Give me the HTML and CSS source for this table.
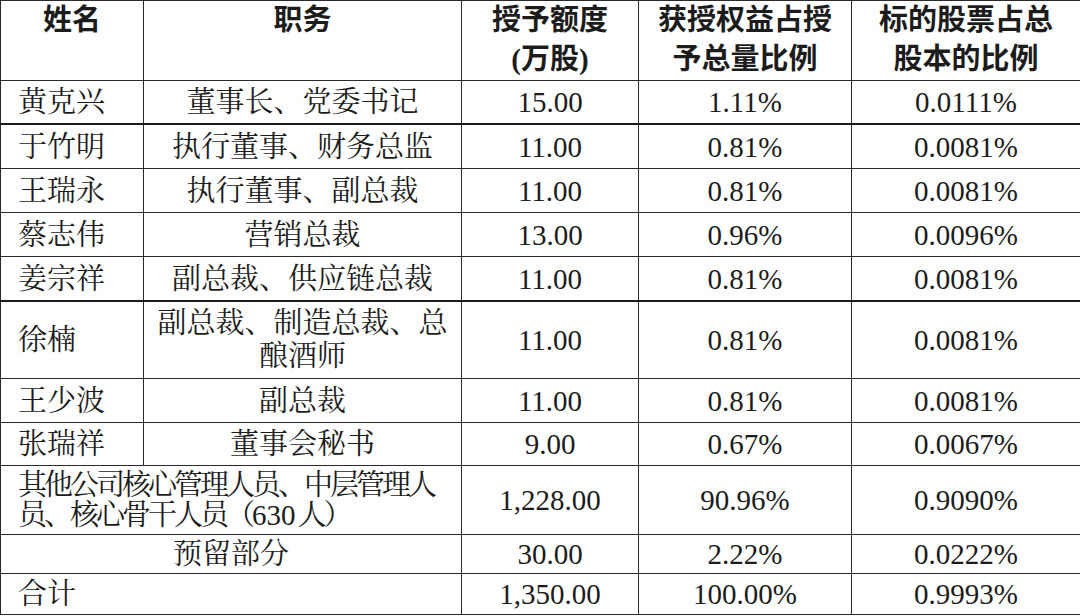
FILE: index.html
```html
<!DOCTYPE html>
<html lang="zh-CN">
<head>
<meta charset="utf-8">
<title>授予分配表</title>
<link rel="stylesheet" href="styles.css">
</head>
<body>
<table class="grant">
  <colgroup>
    <col class="c1"><col class="c2"><col class="c3"><col class="c4"><col class="c5">
  </colgroup>
  <thead>
    <tr class="hrow">
      <th>姓名</th>
      <th>职务</th>
      <th>授予额度<br>(万股)</th>
      <th>获授权益占授<br>予总量比例</th>
      <th>标的股票占总<br>股本的比例</th>
    </tr>
  </thead>
  <tbody>
    <tr class="r43">
      <td class="name">黄克兴</td><td>董事长、党委书记</td><td>15.00</td><td>1.11%</td><td>0.0111%</td>
    </tr>
    <tr class="r44 thick">
      <td class="name">于竹明</td><td>执行董事、财务总监</td><td>11.00</td><td>0.81%</td><td>0.0081%</td>
    </tr>
    <tr class="r44">
      <td class="name">王瑞永</td><td>执行董事、副总裁</td><td>11.00</td><td>0.81%</td><td>0.0081%</td>
    </tr>
    <tr class="r44">
      <td class="name">蔡志伟</td><td>营销总裁</td><td>13.00</td><td>0.96%</td><td>0.0096%</td>
    </tr>
    <tr class="r44">
      <td class="name">姜宗祥</td><td>副总裁、供应链总裁</td><td>11.00</td><td>0.81%</td><td>0.0081%</td>
    </tr>
    <tr class="r78 thick">
      <td class="name">徐楠</td><td>副总裁、制造总裁、总<br>酿酒师</td><td>11.00</td><td>0.81%</td><td>0.0081%</td>
    </tr>
    <tr class="r45">
      <td class="name">王少波</td><td>副总裁</td><td>11.00</td><td>0.81%</td><td>0.0081%</td>
    </tr>
    <tr class="r43">
      <td class="name">张瑞祥</td><td>董事会秘书</td><td>9.00</td><td>0.67%</td><td>0.0067%</td>
    </tr>
    <tr class="r70">
      <td class="name tight" colspan="2">其他公司核心管理人员、中层管理人<br>员、核心骨干人员（<span class="num">630</span>人）</td><td>1,228.00</td><td>90.96%</td><td>0.9090%</td>
    </tr>
    <tr class="r39">
      <td colspan="2">预留部分</td><td>30.00</td><td>2.22%</td><td>0.0222%</td>
    </tr>
    <tr class="r40">
      <td class="name" colspan="2">合计</td><td>1,350.00</td><td>100.00%</td><td>0.9993%</td>
    </tr>
  </tbody>
</table>
</body>
</html>
```

FILE: styles.css
```css
html, body {
  margin: 0;
  padding: 0;
  background: #ffffff;
}

.grant {
  width: 1080px;
  table-layout: fixed;
  border-collapse: collapse;
  color: #1c1c1c;
  font-family: "Liberation Serif", "Noto Serif CJK SC", "Noto Sans CJK SC", serif;
  font-size: 29px;
}

.c1 { width: 143px; }
.c2 { width: 318px; }
.c3 { width: 177px; }
.c4 { width: 213px; }
.c5 { width: 229px; }

.grant th,
.grant td {
  border: 1px solid #2a2a2a;
  padding: 0;
  text-align: center;
  overflow: hidden;
}

.grant th {
  font-family: "Liberation Serif", "Noto Sans CJK SC", sans-serif;
  font-weight: 700;
  vertical-align: top;
  line-height: 39px;
  height: 79px;
}

.grant td {
  vertical-align: middle;
  line-height: 34px;
}

.grant td.name {
  text-align: left;
  padding-left: 17px;
}

.grant td.tight {
  white-space: nowrap;
  letter-spacing: -3px;
}

.grant td.tight .num {
  letter-spacing: 0;
  margin-right: 2px;
}

.thick td {
  border-top: 2px solid #1a1a1a;
}

.r39 td { height: 38px; }
.r40 td { height: 40px; }
.r43 td { height: 42px; }
.r44 td { height: 43px; }
.r45 td { height: 43px; }
.r78 td { height: 76px; line-height: 33px; }
.r70 td { height: 68px; line-height: 30px; }
```
